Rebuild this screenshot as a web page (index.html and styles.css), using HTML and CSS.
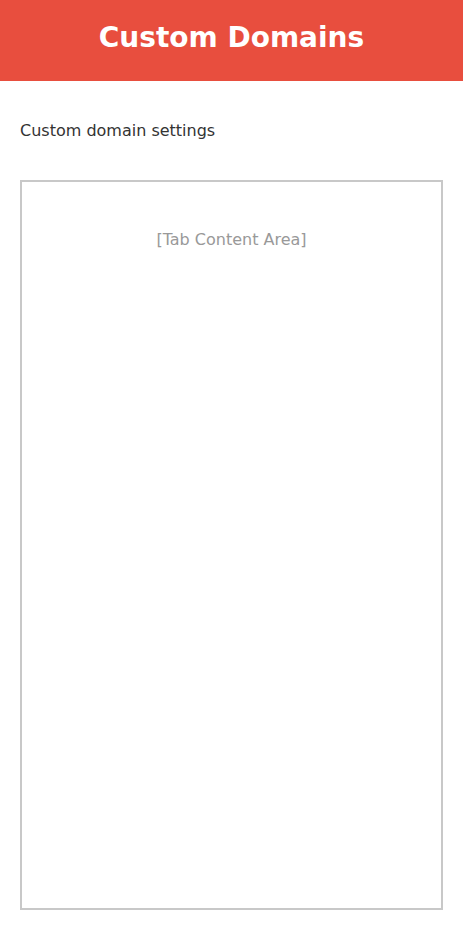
FILE: index.html
```html
<!DOCTYPE html>
<html lang="en">
<head>
    <meta charset="UTF-8">
    <title>Custom Domains</title>
    <link rel="stylesheet" href="styles.css">
</head>
<body>

<header class="page-header">
    <h1>Custom Domains</h1>
</header>

<main class="content">
    <p class="subtitle">Custom domain settings</p>
    <div class="tab-content">
        <p class="placeholder">[Tab Content Area]</p>
    </div>
</main>

</body>
</html>
```

FILE: styles.css
```css
html, body { height: 100%; }
body {
  margin: 0;
  font-family: "DejaVu Sans", sans-serif;
  background: #fff;
  display: flex;
  flex-direction: column;
}

.page-header {
  background: #e84e3e;
  padding: 21px 0 27px;
  text-align: center;
}
.page-header h1 {
  margin: 0;
  color: #fff;
  font-size: 28px;
  font-weight: bold;
}

.content {
  flex: 1;
  display: flex;
  flex-direction: column;
  padding: 20px;
}

.subtitle {
  margin: 20px 0 40px;
  font-size: 16px;
  color: #333;
}

.tab-content {
  flex: 1;
  border: 2px solid #c8c8c8;
  padding: 48px 20px 20px;
}

.placeholder {
  margin: 0;
  text-align: center;
  font-size: 16px;
  color: #999;
}
```
